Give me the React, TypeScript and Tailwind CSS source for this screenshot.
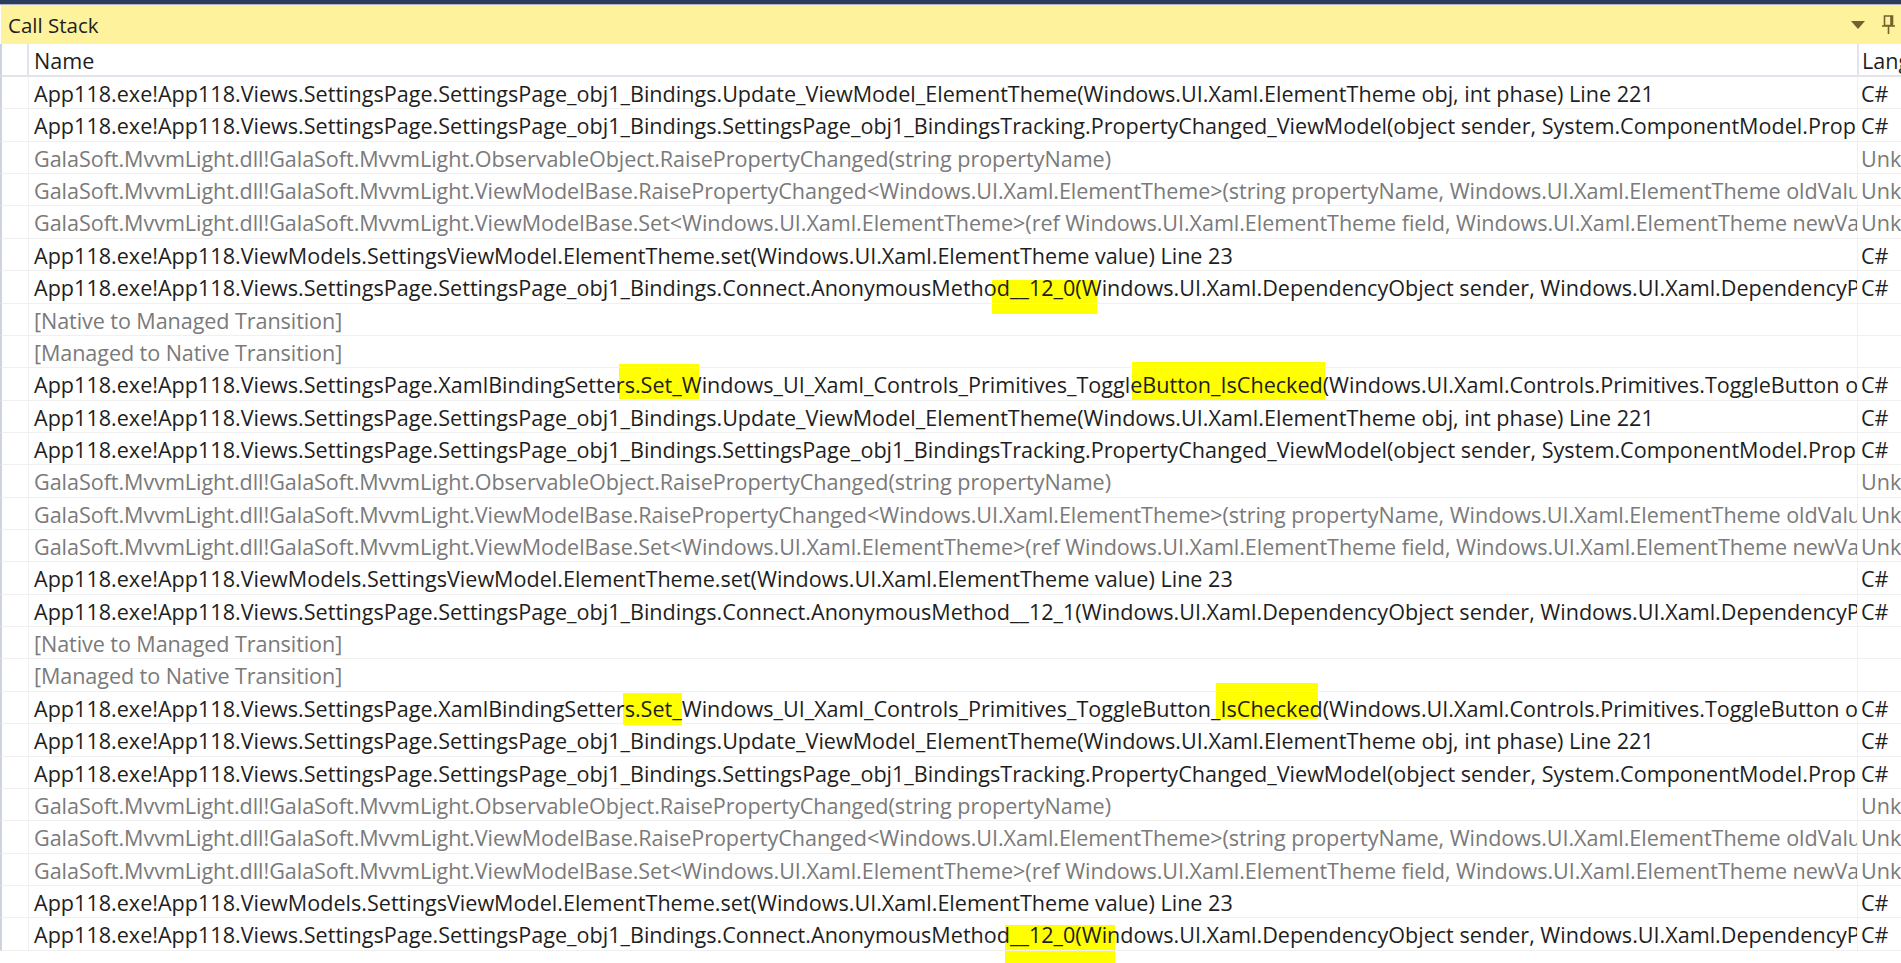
type Hl = { text: string; cls: string };
type Seg = string | Hl;
type Row = { segs: Seg[]; gray?: boolean; tight?: string; lang: string };

const update = "App118.exe!App118.Views.SettingsPage.SettingsPage_obj1_Bindings.Update_ViewModel_ElementTheme(Windows.UI.Xaml.ElementTheme obj, int phase) Line 221";
const tracking = "App118.exe!App118.Views.SettingsPage.SettingsPage_obj1_Bindings.SettingsPage_obj1_BindingsTracking.PropertyChanged_ViewModel(object sender, System.ComponentModel.Prop";
const raise = "GalaSoft.MvvmLight.dll!GalaSoft.MvvmLight.ObservableObject.RaisePropertyChanged(string propertyName)";
const raise2 = "GalaSoft.MvvmLight.dll!GalaSoft.MvvmLight.ViewModelBase.RaisePropertyChanged<Windows.UI.Xaml.ElementTheme>(string propertyName, Windows.UI.Xaml.ElementTheme oldValu";
const setter = "GalaSoft.MvvmLight.dll!GalaSoft.MvvmLight.ViewModelBase.Set<Windows.UI.Xaml.ElementTheme>(ref Windows.UI.Xaml.ElementTheme field, Windows.UI.Xaml.ElementTheme newVa";
const vm = "App118.exe!App118.ViewModels.SettingsViewModel.ElementTheme.set(Windows.UI.Xaml.ElementTheme value) Line 23";
const connA = "App118.exe!App118.Views.SettingsPage.SettingsPage_obj1_Bindings.Connect.AnonymousMeth";
const connB = "indows.UI.Xaml.DependencyObject sender, Windows.UI.Xaml.DependencyP";

const cycle = (): Row[] => [
  { segs: [update], lang: "C#" },
  { segs: [tracking], lang: "C#" },
  { segs: [raise], gray: true, tight: "tracking-[-0.05px]", lang: "Unk" },
  { segs: [raise2], gray: true, tight: "tracking-[-0.05px]", lang: "Unk" },
  { segs: [setter], gray: true, tight: "tracking-[-0.05px]", lang: "Unk" },
  { segs: [vm], lang: "C#" },
];
const transitions: Row[] = [
  { segs: ["[Native to Managed Transition]"], gray: true, tight: "tracking-[-0.08px]", lang: "" },
  { segs: ["[Managed to Native Transition]"], gray: true, tight: "tracking-[-0.08px]", lang: "" },
];
const tail = "(Windows.UI.Xaml.Controls.Primitives.ToggleButton ob";

const rows: Row[] = [
  ...cycle(),
  { segs: [connA, { text: "od__12_0(W", cls: "left-[8px] right-[5px] top-[7px] bottom-[-12px]" }, connB], lang: "C#" },
  ...transitions,
  {
    segs: [
      "App118.exe!App118.Views.SettingsPage.XamlBindingSette",
      { text: "rs.Set_W", cls: "left-[3px] right-[3px] top-[-6px] bottom-[0px]" },
      "indows_UI_Xaml_Controls_Primitives_Toggl",
      { text: "eButton_IsChecked", cls: "left-[2px] right-[-2px] top-[-8px] bottom-[-2px]" },
      tail,
    ],
    lang: "C#",
  },
  ...cycle(),
  { segs: [connA + "od__12_1(W" + connB], lang: "C#" },
  ...transitions,
  {
    segs: [
      "App118.exe!App118.Views.SettingsPage.XamlBindingSette",
      { text: "rs.Set_", cls: "left-[7px] right-[0px] top-[-1px] bottom-[-2px]" },
      "Windows_UI_Xaml_Controls_Primitives_ToggleButton",
      { text: "_IsChecked", cls: "left-[5px] right-[5px] top-[-11px] bottom-[4px]" },
      tail,
    ],
    lang: "C#",
  },
  ...cycle(),
  {
    segs: [connA + "o", { text: "d__12_0(Wi", cls: "left-[8px] right-[-8px] top-[5px] bottom-[-14px]" }, connB.slice(1)],
    lang: "C#",
  },
];

export default function App() {
  return (
    <div className="isolate flex h-[963px] w-[1901px] flex-col overflow-hidden bg-white font-['Open_Sans','Noto_Sans',sans-serif] text-[21.58px] leading-[32px] text-[#1e1e1e]">
      <div className="h-[4px] shrink-0 bg-[#2d3c5c]" />
      <div className="h-[1px] shrink-0 bg-[#a9b4c8]" />
      <div className="ml-[1px] flex h-[39px] shrink-0 items-center justify-between bg-[#fff29d] pl-[7px] pr-[6px] text-[20.5px]">
        <span>Call Stack</span>
        <div className="flex items-center gap-[17px]">
          <svg width="14" height="8" viewBox="0 0 14 8"><path d="M0 0H14L7 8Z" fill="#75602e" /></svg>
          <svg width="13" height="19" viewBox="0 0 13 19" fill="none" stroke="#75602e" strokeWidth="1.6"><path d="M2.5 1H10.5V10.5H2.5ZM0 11H13M6.5 11V19M9 1V10.5" /></svg>
        </div>
      </div>
      <div className="flex h-[33px] shrink-0 border-b-2 border-l-2 border-b-[#e3e3ec] border-l-[#cdd3e0]">
        <div className="w-[27px] shrink-0 border-r-2 border-[#e3e3ec]" />
        <div className="min-w-0 flex-1 pl-[5px] pt-[1px]">Name</div>
        <div className="w-[44px] shrink-0 overflow-x-clip border-l-2 border-[#e3e3ec] pl-[3px] pt-[1px]">Lang</div>
      </div>
      {rows.map((r, i) => (
        <div key={i} className="flex h-[32.36px] shrink-0 border-b border-l-2 border-b-[#f0f0f0] border-l-[#cdd3e0]">
          <div className="w-[27px] shrink-0 border-r border-[#f0f0f0]" />
          <div className={`min-w-0 flex-1 overflow-x-clip whitespace-nowrap pl-[5px] pt-[1px] ${r.gray ? "text-[#7a7a7a]" : "text-[#1e1e1e]"} ${r.tight ?? ""}`}>
            {r.segs.map((s, j) =>
              typeof s === "string" ? (
                <span key={j}>{s}</span>
              ) : (
                <span key={j} className="relative">
                  <span className={`absolute -z-10 bg-[#ffff00] ${s.cls}`} />
                  {s.text}
                </span>
              ),
            )}
          </div>
          <div className={`w-[44px] shrink-0 overflow-x-clip whitespace-nowrap border-l border-[#f0f0f0] pl-[3px] pt-[1px] ${r.gray ? "text-[#7a7a7a]" : "text-[#1e1e1e]"}`}>{r.lang}</div>
        </div>
      ))}
    </div>
  );
}
